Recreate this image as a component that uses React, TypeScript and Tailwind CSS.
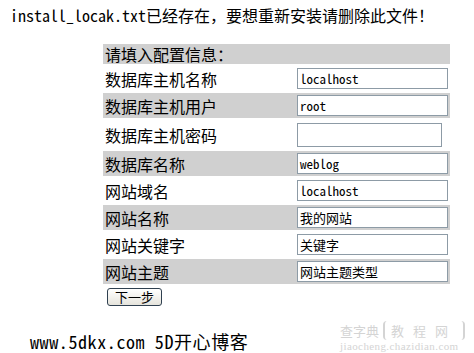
import React from 'react';

interface Field {
    label: string;
    value: string;
    grey: boolean;
    password?: boolean;
}

const fields: Field[] = [
    { label: '数据库主机名称', value: 'localhost', grey: false },
    { label: '数据库主机用户', value: 'root', grey: true },
    { label: '数据库主机密码', value: '', grey: false, password: true },
    { label: '数据库名称', value: 'weblog', grey: true },
    { label: '网站域名', value: 'localhost', grey: false },
    { label: '网站名称', value: '我的网站', grey: true },
    { label: '网站关键字', value: '关键字', grey: false },
    { label: '网站主题', value: '网站主题类型', grey: true },
];

const font = 'font-["Noto_Sans_Mono_CJK_SC","Liberation_Mono","Noto_Sans_CJK_SC",monospace]';

export default function App() {
    return (
        <div className={`relative w-[474px] h-[353px] overflow-hidden bg-white text-black ${font}`}>
            {/* warning line */}
            <div className="pl-[10px] pt-[5px] text-[16px] leading-[20px] whitespace-nowrap">
                install_locak.txt已经存在，要想重新安装请删除此文件！
            </div>

            {/* config table */}
            <div className="ml-[103px] mt-[19px] w-[347px] flex flex-col gap-[2px]">
                <div className="h-[20px] bg-[#d0d0d0] pl-[2px] text-[16px] leading-[20px]">
                    请填入配置信息：
                </div>
                {fields.map(f => (
                    <div
                        key={f.label}
                        className={`flex items-center ${f.password ? 'h-[29px]' : 'h-[25px]'} ${f.grey ? 'bg-[#d0d0d0]' : ''}`}
                    >
                        <div className="w-[194px] pl-[2px] text-[16px] leading-[20px] whitespace-nowrap">
                            {f.label}
                        </div>
                        <div
                            className={`bg-white border border-[#8d9ba6] px-[2px] text-[13px] leading-[19px] whitespace-nowrap ${
                                f.password ? 'w-[145px] h-[24px]' : 'w-[151px] h-[21px]'
                            }`}
                        >
                            {f.value}
                        </div>
                    </div>
                ))}
                <div className="h-[22px] flex items-center pl-[4px]">
                    <button className="w-[55px] h-[18px] rounded-[3px] border border-[#2f4050] bg-gradient-to-b from-white to-[#e6e4dc] text-[13px] leading-[16px] text-black">
                        下一步
                    </button>
                </div>
            </div>

            {/* footer */}
            <div className="pl-[30px] mt-[21px] text-[18px] leading-[24px] tracking-[0.6px] whitespace-nowrap">
                www.5dkx.com 5D开心博客
            </div>

            {/* watermark */}
            <div className="absolute left-[340px] top-[321px] flex flex-col items-start text-[#d4d4d4]">
                <div className="flex items-center gap-[4px] text-[13px] leading-[19px]">
                    <span>查字典</span>
                    <span className="px-[6px] border-l-2 border-r-2 border-[#d4d4d4] rounded-[4px] tracking-[9px]">教程网</span>
                </div>
                <div className="text-[11px] leading-[12px] tracking-[0.4px] font-['Liberation_Serif',serif]">jiaocheng.chazidian.com</div>
            </div>
        </div>
    );
}
